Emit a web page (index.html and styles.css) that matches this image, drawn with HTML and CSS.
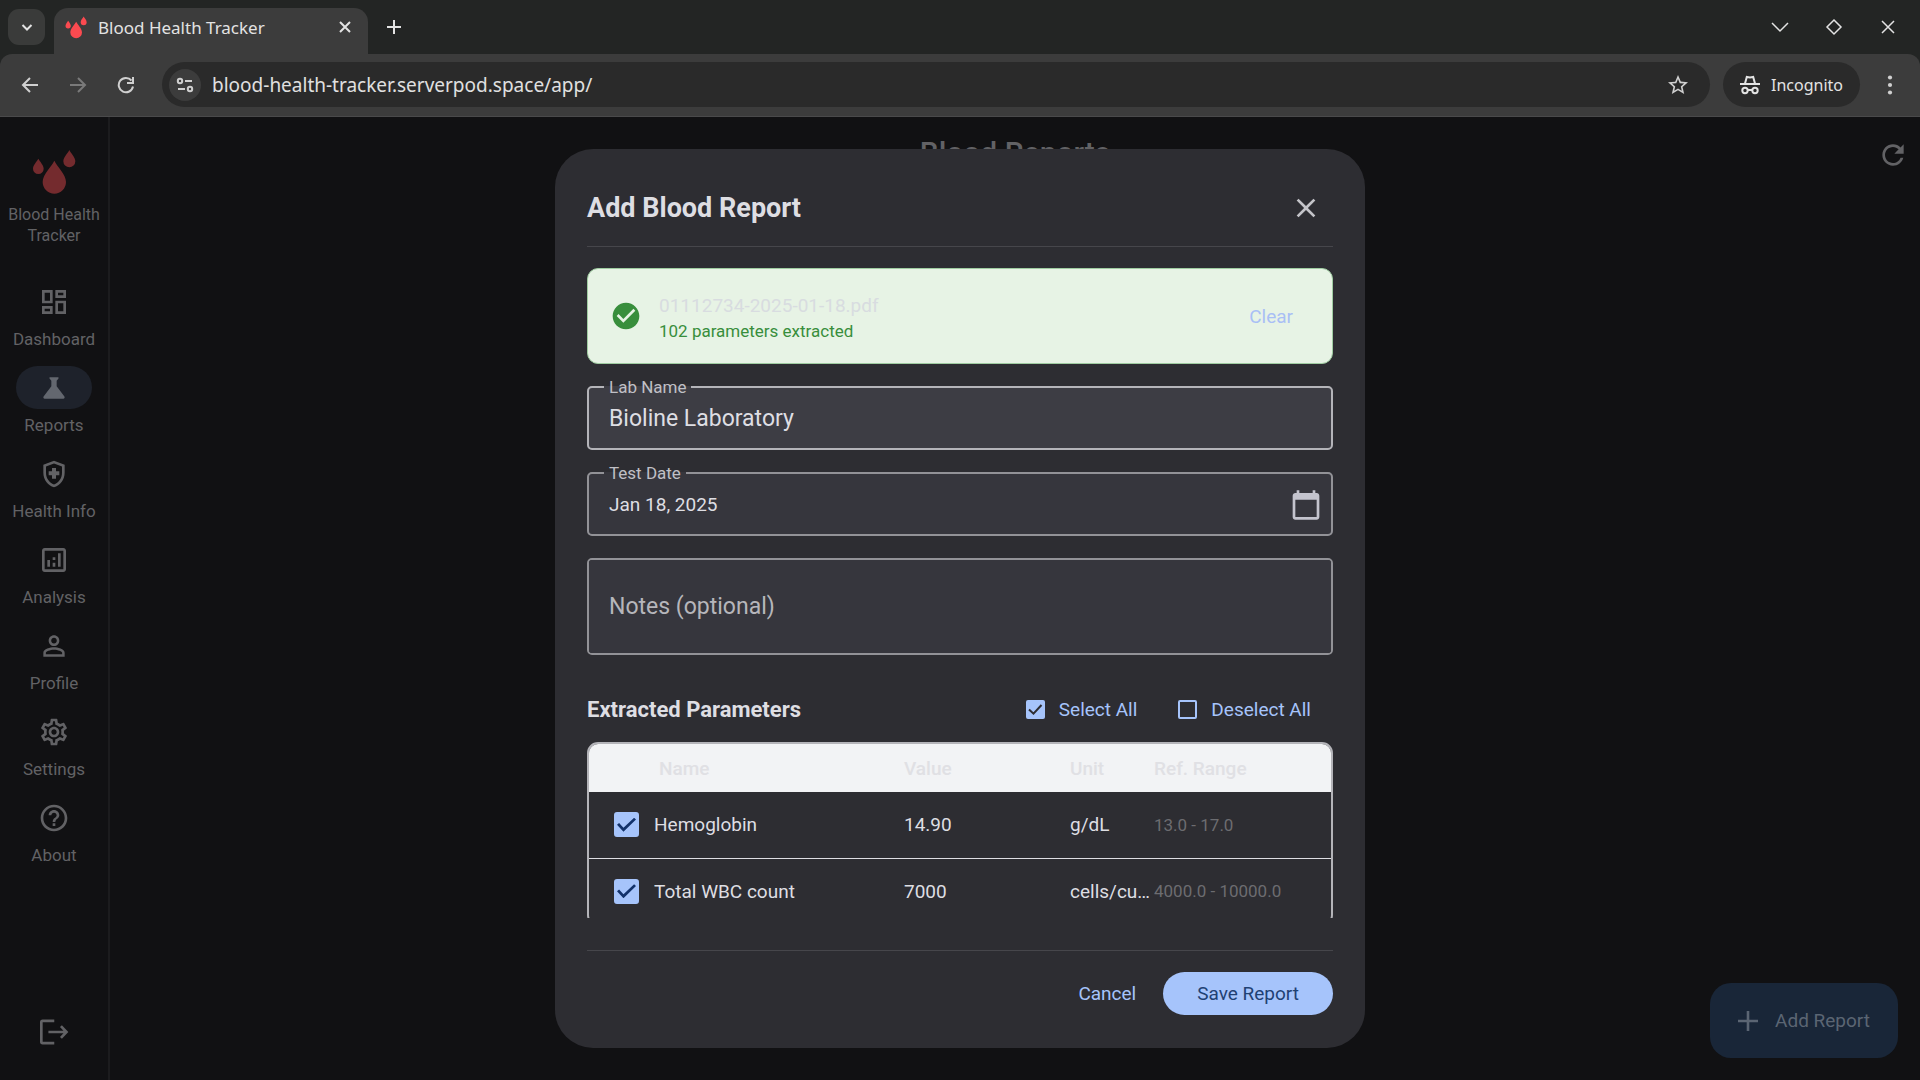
FILE: index.html
```html
<!DOCTYPE html>
<html lang="en">
<head>
  <meta charset="UTF-8">
  <meta name="viewport" content="width=device-width, initial-scale=1.0">
  <title>Blood Health Tracker</title>
  <link rel="stylesheet" href="styles.css">
</head>
<body>
  <svg class="defs" aria-hidden="true">
    <symbol id="drops" viewBox="96 84 132 138">
      <path d="M163 119C171 136 198 160 198 183A35 35 0 0 1 128 183C128 160 155 136 163 119Z"/>
      <path d="M115 113C119 121 131 132 131 143A16 16 0 0 1 99 143C99 132 111 121 115 113Z"/>
      <path d="M208 87C212 96 226 108 226 121A18 18 0 0 1 190 121C190 108 204 96 208 87Z"/>
    </symbol>
  </svg>

  <header class="browser">
    <div class="tab-strip">
      <button class="tab-search" type="button" aria-label="Search tabs">
        <svg width="14" height="14" viewBox="0 0 14 14"><path class="line" stroke-width="2" d="M2.500 5l4.500 4.500L11.500 5"/></svg>
      </button>
      <div class="tab">
        <svg class="tab-logo" width="22" height="23"><use href="#drops"/></svg>
        <span class="tab-title">Blood Health Tracker</span>
        <button type="button" aria-label="Close tab">
          <svg width="14" height="14" viewBox="0 0 14 14"><path class="line" stroke-width="2" d="M2 2l10 10M12 2L2 12"/></svg>
        </button>
      </div>
      <button class="new-tab" type="button" aria-label="New tab">
        <svg width="16" height="16" viewBox="0 0 16 16"><path class="line" stroke-width="2" d="M8 1v14M1 8h14"/></svg>
      </button>
      <div class="window-buttons">
        <button type="button" aria-label="Minimize">
          <svg width="18" height="18" viewBox="0 0 18 18"><path class="line" stroke-width="1.500" d="M1 5l8 8 8-8"/></svg>
        </button>
        <button type="button" aria-label="Maximize">
          <svg width="18" height="18" viewBox="0 0 18 18"><path class="line" stroke-width="1.500" d="M9 2l7 7-7 7-7-7z"/></svg>
        </button>
        <button type="button" aria-label="Close window">
          <svg width="18" height="18" viewBox="0 0 18 18"><path class="line" stroke-width="1.500" d="M3 3l12 12M15 3L3 15"/></svg>
        </button>
      </div>
    </div>

    <div class="toolbar">
      <div class="nav-buttons">
        <button type="button" aria-label="Back">
          <svg width="18" height="18" viewBox="0 0 18 18"><path class="line" stroke-width="2" d="M17 9H2M9 2L2 9l7 7"/></svg>
        </button>
        <button class="dim" type="button" aria-label="Forward">
          <svg width="18" height="18" viewBox="0 0 18 18"><path class="line" stroke-width="2" d="M1 9h15M9 2l7 7-7 7"/></svg>
        </button>
        <button type="button" aria-label="Reload">
          <svg width="18" height="18" viewBox="0 0 18 18"><path class="line" stroke-width="2" d="M16 10.500A7.200 7.200 0 1 1 14.500 4.500M16 1v6h-6"/></svg>
        </button>
      </div>
      <div class="address">
        <button class="site-info" type="button" aria-label="Site information">
          <svg width="18" height="16" viewBox="0 0 18 16">
            <g class="line" stroke-width="2"><circle cx="4" cy="4" r="2.200"/><path d="M9 4h7"/><circle cx="14" cy="12" r="2.200"/><path d="M2 12h7"/></g>
          </svg>
        </button>
        <input class="url" type="text" aria-label="Address" value="blood-health-tracker.serverpod.space/app/">
        <button type="button" aria-label="Bookmark">
          <svg width="24" height="24" viewBox="0 0 24 24"><path d="M22 9.240l-7.190-.62L12 2 9.190 8.630 2 9.240l5.460 4.730L5.820 21 12 17.270 18.180 21l-1.630-7.030L22 9.240zM12 15.400l-3.760 2.270 1-4.280-3.320-2.880 4.380-.38L12 6.100l1.710 4.040 4.380.38-3.320 2.880 1 4.280L12 15.400z"/></svg>
        </button>
      </div>
      <button class="incognito" type="button">
        <svg width="20" height="20" viewBox="0 0 20 20">
          <path d="M0 8h20v2H0z"/>
          <path class="line" stroke-width="2" d="M5 8.500L6.800 2l3.200.6L13.200 2 15 8.500"/>
          <g class="line" stroke-width="2"><circle cx="5" cy="15.500" r="2.700"/><circle cx="15" cy="15.500" r="2.700"/><path d="M7.700 15h4.600"/></g>
        </svg>
        Incognito
      </button>
      <button class="menu" type="button" aria-label="Menu">
        <svg width="6" height="20" viewBox="0 0 6 20"><circle cx="3" cy="2.500" r="2.100"/><circle cx="3" cy="10" r="2.100"/><circle cx="3" cy="17.500" r="2.100"/></svg>
      </button>
    </div>
  </header>

  <div class="app">
    <div class="page">
      <aside class="rail">
        <div class="brand">
          <svg class="brand-logo" width="44" height="46"><use href="#drops"/></svg>
          <span>Blood Health Tracker</span>
        </div>
        <nav>
          <a href="#dashboard">
            <span class="pill"><svg class="icon" viewBox="0 0 24 24"><path d="M19 5v2h-4V5h4M9 5v6H5V5h4m10 8v6h-4v-6h4M9 17v2H5v-2h4M21 3h-8v6h8V3zM11 3H3v10h8V3zm10 8h-8v10h8V11zm-10 4H3v6h8v-6z"/></svg></span>
            Dashboard
          </a>
          <a href="#reports" class="active">
            <span class="pill"><svg class="icon" viewBox="0 0 24 24"><path d="M19.800 18.400L14 10.670V6.500l1.350-1.690C15.610 4.480 15.380 4 14.960 4H9.040C8.620 4 8.390 4.480 8.650 4.810L10 6.500v4.170L4.200 18.400C3.710 19.060 4.180 20 5 20h14C19.820 20 20.290 19.060 19.800 18.400z"/></svg></span>
            Reports
          </a>
          <a href="#health">
            <span class="pill"><svg class="icon" viewBox="0 0 24 24"><path d="M10.500 13H8v-3h2.500V7.500h3V10H16v3h-2.500v2.500h-3V13zM12 2L4 5v6.090c0 5.050 3.410 9.760 8 10.910c4.590-1.150 8-5.860 8-10.910V5L12 2zM18 11.090c0 4-2.550 7.700-6 8.830c-3.450-1.130-6-4.820-6-8.830v-4.700l6-2.250l6 2.250V11.090z"/></svg></span>
            Health Info
          </a>
          <a href="#analysis">
            <span class="pill"><svg class="icon" viewBox="0 0 24 24"><path d="M19 3H5c-1.100 0-2 .9-2 2v14c0 1.100.9 2 2 2h14c1.100 0 2-.9 2-2V5c0-1.100-.9-2-2-2zm0 16H5V5h14v14zM7 12h2v5H7zM15 7h2v10h-2zM11 14h2v3h-2zM11 10h2v2h-2z"/></svg></span>
            Analysis
          </a>
          <a href="#profile">
            <span class="pill"><svg class="icon" viewBox="0 0 24 24"><path d="M12 5.900c1.160 0 2.100.94 2.100 2.100s-.94 2.100-2.100 2.100S9.900 9.160 9.900 8s.94-2.100 2.100-2.100m0 9c2.970 0 6.100 1.460 6.100 2.100v1.100H5.900V17c0-.64 3.130-2.100 6.100-2.100M12 4C9.790 4 8 5.790 8 8s1.790 4 4 4 4-1.790 4-4-1.790-4-4-4zm0 9c-2.670 0-8 1.340-8 4v3h16v-3c0-2.660-5.330-4-8-4z"/></svg></span>
            Profile
          </a>
          <a href="#settings">
            <span class="pill"><svg class="icon" viewBox="0 0 24 24"><path d="M19.430 12.980c.04-.32.07-.64.07-.98 0-.34-.03-.66-.07-.98l2.110-1.650c.19-.15.24-.42.12-.64l-2-3.460c-.09-.16-.26-.25-.44-.25-.06 0-.12.01-.17.03l-2.490 1c-.52-.4-1.080-.73-1.690-.98l-.38-2.650C14.460 2.180 14.250 2 14 2h-4c-.25 0-.46.18-.49.42l-.38 2.650c-.61.25-1.170.59-1.690.98l-2.490-1c-.06-.02-.12-.03-.18-.03-.17 0-.34.09-.43.25l-2 3.460c-.13.22-.07.49.12.64l2.110 1.650c-.04.32-.07.65-.07.98 0 .33.03.66.07.98l-2.110 1.650c-.19.15-.24.42-.12.64l2 3.460c.09.16.26.25.44.25.06 0 .12-.01.17-.03l2.490-1c.52.4 1.080.73 1.690.98l.38 2.650c.03.24.24.42.49.42h4c.25 0 .46-.18.49-.42l.38-2.650c.61-.25 1.170-.59 1.690-.98l2.490 1c.06.02.12.03.18.03.17 0 .34-.09.43-.25l2-3.460c.12-.22.07-.49-.12-.64l-2.110-1.650zm-1.980-1.710c.04.31.05.52.05.73 0 .21-.02.43-.05.73l-.14 1.130.89.7 1.080.84-.7 1.210-1.270-.51-1.040-.42-.9.68c-.43.32-.84.56-1.250.73l-1.060.43-.16 1.130-.2 1.350h-1.400l-.19-1.350-.16-1.130-1.060-.43c-.43-.18-.83-.41-1.230-.71l-.91-.7-1.060.43-1.270.51-.7-1.210 1.080-.84.89-.7-.14-1.130c-.03-.31-.05-.54-.05-.74s.02-.43.05-.73l.14-1.130-.89-.7-1.080-.84.7-1.210 1.270.51 1.040.42.9-.68c.43-.32.84-.56 1.250-.73l1.060-.43.16-1.130.2-1.350h1.390l.19 1.350.16 1.130 1.060.43c.43.18.83.41 1.230.71l.91.7 1.060-.43 1.270-.51.7 1.210-1.070.85-.89.7.14 1.130zM12 8c-2.210 0-4 1.790-4 4s1.790 4 4 4 4-1.790 4-4-1.790-4-4-4zm0 6c-1.100 0-2-.9-2-2s.9-2 2-2 2 .9 2 2-.9 2-2 2z"/></svg></span>
            Settings
          </a>
          <a href="#about">
            <span class="pill"><svg class="icon" viewBox="0 0 24 24"><path d="M11 18h2v-2h-2v2zm1-16C6.480 2 2 6.480 2 12s4.480 10 10 10 10-4.480 10-10S17.520 2 12 2zm0 18c-4.410 0-8-3.590-8-8s3.590-8 8-8 8 3.590 8 8-3.590 8-8 8zm0-14c-2.210 0-4 1.790-4 4h2c0-1.100.9-2 2-2s2 .9 2 2c0 2-3 1.750-3 5h2c0-2.250 3-2.500 3-5 0-2.210-1.790-4-4-4z"/></svg></span>
            About
          </a>
        </nav>
        <button class="logout" type="button" aria-label="Log out">
          <svg class="icon" viewBox="0 0 24 24"><path class="line" stroke-width="2" d="M12.200 3.700H3.500q-1 0-1 1v14.600q0 1 1 1h8.700M7.800 12h13.500M17.200 7.600l4.200 4.400-4.200 4.400"/></svg>
        </button>
      </aside>

      <main>
        <div class="app-bar">
          <h1>Blood Reports</h1>
          <button type="button" aria-label="Refresh">
            <svg class="icon" viewBox="0 0 24 24"><path d="M17.650 6.350C16.200 4.900 14.210 4 12 4c-4.420 0-7.990 3.580-7.990 8s3.570 8 7.990 8c3.730 0 6.840-2.550 7.730-6h-2.080c-.82 2.330-3.040 4-5.650 4-3.310 0-6-2.690-6-6s2.690-6 6-6c1.660 0 3.140.69 4.220 1.780L13 11h7V4l-2.350 2.350z"/></svg>
          </button>
        </div>
        <button class="add-report" type="button">
          <svg width="20" height="20" viewBox="0 0 20 20"><path class="line" stroke-width="2.600" d="M10 0v20M0 10h20"/></svg>
          Add Report
        </button>
      </main>
    </div>

    <div class="overlay">
      <form class="dialog" role="dialog" aria-labelledby="dialogTitle">
        <div class="dialog-header">
          <h2 id="dialogTitle">Add Blood Report</h2>
          <button type="button" aria-label="Close">
            <svg class="icon" viewBox="0 0 24 24"><path d="M19 6.410L17.590 5 12 10.590 6.410 5 5 6.410 10.590 12 5 17.590 6.410 19 12 13.410 17.590 19 19 17.590 13.410 12z"/></svg>
          </button>
        </div>

        <div class="dialog-body">
          <div class="file">
            <svg class="icon" viewBox="0 0 24 24"><path d="M12 2C6.480 2 2 6.480 2 12s4.480 10 10 10 10-4.480 10-10S17.520 2 12 2zm-2 15l-5-5 1.410-1.410L10 14.170l7.590-7.590L19 8l-9 9z"/></svg>
            <div class="file-info">
              <div class="file-name">01112734-2025-01-18.pdf</div>
              <div class="file-status">102 parameters extracted</div>
            </div>
            <button type="button">Clear</button>
          </div>

          <fieldset class="field focused">
            <legend><label for="labName">Lab Name</label></legend>
            <input type="text" id="labName" value="Bioline Laboratory">
          </fieldset>

          <fieldset class="field date">
            <legend><label for="testDate">Test Date</label></legend>
            <input type="text" id="testDate" value="Jan 18, 2025">
            <svg class="icon" viewBox="0 0 24 24"><path d="M20 3h-1V1h-2v2H7V1H5v2H4c-1.100 0-2 .9-2 2v16c0 1.100.9 2 2 2h16c1.100 0 2-.9 2-2V5c0-1.100-.9-2-2-2zm0 18H4V8h16v13z"/></svg>
          </fieldset>

          <textarea class="notes" aria-label="Notes (optional)" placeholder="Notes (optional)"></textarea>

          <div class="params-header">
            <h3>Extracted Parameters</h3>
            <button type="button">
              <svg width="19" height="19" viewBox="0 0 19 19"><rect width="19" height="19" rx="2"/><path class="tick" d="M3 9.500l4.500 4.200L15.500 5"/></svg>
              Select All
            </button>
            <button type="button">
              <svg width="19" height="19" viewBox="0 0 19 19"><rect class="line" x="1" y="1" width="17" height="17" rx="1" stroke-width="2"/></svg>
              Deselect All
            </button>
          </div>

          <div class="params">
            <table>
              <colgroup>
                <col class="col-check">
                <col class="col-name">
                <col class="col-value">
                <col class="col-unit">
                <col>
              </colgroup>
              <thead>
                <tr><th></th><th>Name</th><th>Value</th><th>Unit</th><th>Ref. Range</th></tr>
              </thead>
              <tbody>
                <tr>
                  <td><input type="checkbox" id="hemoglobin" checked></td>
                  <td><label for="hemoglobin">Hemoglobin</label></td>
                  <td>14.90</td>
                  <td>g/dL</td>
                  <td class="range">13.0 - 17.0</td>
                </tr>
                <tr>
                  <td><input type="checkbox" id="wbc" checked></td>
                  <td><label for="wbc">Total WBC count</label></td>
                  <td>7000</td>
                  <td>cells/cumm</td>
                  <td class="range">4000.0 - 10000.0</td>
                </tr>
              </tbody>
            </table>
          </div>
        </div>

        <div class="dialog-footer">
          <button type="button">Cancel</button>
          <button class="save" type="button">Save Report</button>
        </div>
      </form>
    </div>
  </div>
</body>
</html>
```

FILE: styles.css
```css
* {
  box-sizing: border-box;
}
body {
  margin: 0;
  height: 100vh;
  display: flex;
  flex-direction: column;
  font-family: Roboto, Arial, sans-serif;
  background-color: #111113;
  overflow: hidden;
}
button {
  display: flex;
  align-items: center;
  justify-content: center;
  padding: 0;
  border: 0;
  background: none;
  color: inherit;
  font: inherit;
  cursor: pointer;
}
input, textarea {
  border: 0;
  outline: 0;
  background: none;
  color: inherit;
  font-family: inherit;
}
svg {
  fill: currentColor;
  flex: none;
}
.defs {
  position: absolute;
  width: 0;
  height: 0;
}
.line {
  fill: none;
  stroke: currentColor;
}
.icon {
  width: 32px;
  height: 32px;
}

/* browser window */
.browser {
  background-color: #232524;
  color: #e3e3e3;
  font-family: "Noto Sans", sans-serif;
}
.tab-strip {
  display: flex;
  align-items: center;
  height: 54px;
  padding-left: 8px;
}
.tab-search {
  width: 37px;
  height: 36px;
  border-radius: 11px;
  background-color: #3a3b3a;
}
.tab {
  display: flex;
  align-items: center;
  align-self: flex-end;
  gap: 11px;
  width: 314px;
  height: 46px;
  margin-left: 9px;
  padding: 0 16px 8px 11px;
  border-radius: 14px 14px 0 0;
  background-color: #3c3c3c;
  font-size: 17px;
}
.tab-logo {
  color: #fb4a50;
}
.tab-title {
  flex: 1;
}
.new-tab {
  width: 52px;
  height: 40px;
}
.window-buttons {
  display: flex;
  margin-left: auto;
  padding-right: 5px;
}
.window-buttons button {
  width: 54px;
  height: 40px;
}
.toolbar {
  display: flex;
  align-items: center;
  height: 63px;
  padding: 0 16px 1px 6px;
  border-bottom: 1px solid #4a4a4b;
  border-radius: 12px 12px 0 0;
  background-color: #3c3c3c;
  color: #d0d0d0;
}
.nav-buttons {
  display: flex;
  margin-right: 12px;
}
.nav-buttons button {
  width: 48px;
  height: 45px;
}
.nav-buttons .dim {
  color: #7a7a7a;
}
.address {
  flex: 1;
  display: flex;
  align-items: center;
  height: 45px;
  padding: 0 20px 0 7px;
  border-radius: 23px;
  background-color: #2a2a2a;
}
.site-info {
  width: 32px;
  height: 32px;
  border-radius: 50%;
  background-color: #3c3c3c;
}
.url {
  flex: 1;
  padding: 0 11px;
  color: #e0e0e0;
  font-size: 19px;
}
.incognito {
  gap: 11px;
  height: 45px;
  margin-left: 13px;
  padding: 0 17px;
  border-radius: 23px;
  background-color: #2a2a2a;
  color: #e3e3e3;
  font-size: 16px;
}
.menu {
  width: 28px;
  height: 45px;
  margin-left: 16px;
}

/* the page and the dialog over it share one grid cell */
.app {
  flex: 1;
  min-height: 0;
  display: grid;
  grid-template: 100% / 100%;
}
.page, .overlay {
  grid-area: 1 / 1;
}
.page {
  display: flex;
  color: #626265;
}
.rail {
  display: flex;
  flex-direction: column;
  align-items: center;
  width: 110px;
  padding: 32px 0 27px;
  border-right: 2px solid #1c1c1e;
  font-size: 17px;
}
.brand {
  display: flex;
  flex-direction: column;
  align-items: center;
  gap: 9px;
  width: 104px;
  font-size: 16px;
  line-height: 21px;
  text-align: center;
}
.brand-logo {
  color: #742b2e;
}
nav {
  display: flex;
  flex-direction: column;
  gap: 16px;
  margin-top: 34px;
}
nav a {
  display: flex;
  flex-direction: column;
  align-items: center;
  gap: 5px;
  color: inherit;
  line-height: 22px;
  text-decoration: none;
}
.pill {
  display: grid;
  place-items: center;
  width: 76px;
  height: 43px;
  border-radius: 22px;
}
.active .pill {
  background-color: #1e222b;
  color: #63676f;
}
.logout {
  width: 43px;
  height: 43px;
  margin-top: auto;
}
main {
  flex: 1;
  display: flex;
  flex-direction: column;
  justify-content: space-between;
}
.app-bar {
  display: grid;
  grid-template-columns: 54px 1fr 54px;
  align-items: center;
  height: 76px;
}
.app-bar h1 {
  grid-column: 2;
  margin: 0;
  padding-bottom: 6px;
  font-size: 30px;
  font-weight: 500;
  text-align: center;
}
.add-report {
  align-self: flex-end;
  gap: 17px;
  height: 75px;
  margin: 0 22px;
  margin-bottom: 22px;
  padding: 0 28px;
  border-radius: 21px;
  background-color: #192638;
  color: #5b6573;
  font-size: 19px;
}

/* dialog */
.overlay {
  display: flex;
  justify-content: center;
  padding: 32px;
  z-index: 1;
}
.dialog {
  display: flex;
  flex-direction: column;
  width: 100%;
  max-width: 810px;
  padding: 32px 32px 33px;
  border-radius: 38px;
  background-color: #2d2d32;
  color: #dedee3;
  font-size: 19px;
}
.dialog-header {
  display: flex;
  align-items: center;
  justify-content: space-between;
  padding-bottom: 11px;
  border-bottom: 1px solid #46464b;
}
.dialog-header h2 {
  margin: 0;
  font-size: 27px;
}
.dialog-header button {
  width: 54px;
  height: 54px;
  color: #c4c4c9;
}
.dialog-body {
  flex: 1;
  min-height: 0;
  margin: 21px 0 32px;
  overflow: hidden;
}
.file {
  display: flex;
  align-items: center;
  gap: 17px;
  height: 96px;
  padding: 0 39px 0 22px;
  border: 1px solid #9fcca1;
  border-radius: 11px;
  background-color: #e7f3e5;
  color: #388e3c;
}
.file-info {
  flex: 1;
  padding-top: 2px;
}
.file-name {
  color: #d8dce0;
  line-height: 27px;
}
.file-status {
  font-size: 17px;
  line-height: 24px;
}
.file button {
  color: #a9bff5;
}
.field {
  display: flex;
  align-items: center;
  height: 73px;
  min-width: 0;
  margin: 13px 0 0;
  padding: 0 9px 8px 15px;
  border: 2px solid #929297;
  border-radius: 5px;
  background-color: #36363d;
}
.field legend {
  padding: 0 5px;
  color: #c0c0c6;
  font-size: 17px;
  line-height: 20px;
}
.field input {
  flex: 1;
  height: 40px;
  padding: 0 5px;
  font-size: 19px;
}
.focused {
  border-color: #b4b4b9;
  background-color: #3d3d44;
}
.focused input {
  font-size: 23px;
}
.field .icon {
  color: #c4c4ce;
}
.notes {
  display: block;
  width: 100%;
  height: 97px;
  margin-top: 22px;
  padding: 32px 20px;
  border: 2px solid #929297;
  border-radius: 5px;
  background-color: #36363d;
  font-size: 23px;
  line-height: 30px;
  resize: none;
}
.notes::placeholder {
  color: #b6b6bb;
}
.params-header {
  display: flex;
  align-items: center;
  gap: 41px;
  height: 43px;
  margin: 33px 0 11px;
  padding-right: 22px;
}
.params-header h3 {
  flex: 1;
  margin: 0;
  font-size: 22px;
}
.params-header button {
  gap: 14px;
  color: #a6c4fb;
}
.tick {
  fill: none;
  stroke: #2d2d32;
  stroke-width: 2;
}
.params {
  border: 2px solid #b4b4b9;
  border-radius: 11px;
  overflow: hidden;
}
table {
  width: 100%;
  border-collapse: collapse;
  table-layout: fixed;
}
.col-check {
  width: 65px;
}
.col-name {
  width: 250px;
}
.col-value {
  width: 166px;
}
.col-unit {
  width: 84px;
}
th {
  height: 48px;
  padding: 0;
  background-color: #f2f3f5;
  color: #e0e0e4;
  font-weight: 500;
  text-align: left;
}
th:nth-child(2) {
  padding-left: 5px;
}
td {
  height: 66px;
  padding: 0;
  overflow: hidden;
  text-overflow: ellipsis;
  white-space: nowrap;
}
td:first-child {
  padding-left: 25px;
}
tbody tr + tr {
  border-top: 1px solid #dedee3;
}
.range {
  color: #6c6c70;
  font-size: 17px;
}
table input {
  appearance: none;
  display: grid;
  place-content: center;
  width: 25px;
  height: 25px;
  margin: 0;
  border: 2px solid #a6c4fb;
  border-radius: 3px;
}
table input:checked {
  background-color: #a6c4fb;
}
table input:checked::before {
  content: "";
  width: 19px;
  height: 14px;
  background-color: #12326b;
  clip-path: polygon(0 50%, 11% 38%, 34% 72%, 90% 0, 100% 12%, 34% 100%);
}
.dialog-footer {
  display: flex;
  align-items: center;
  justify-content: flex-end;
  gap: 27px;
  padding-top: 21px;
  border-top: 1px solid #46464b;
  color: #a6c4fb;
}
.save {
  height: 43px;
  padding: 0 34px;
  border-radius: 22px;
  background-color: #a6c4fb;
  color: #1f4173;
}
```
